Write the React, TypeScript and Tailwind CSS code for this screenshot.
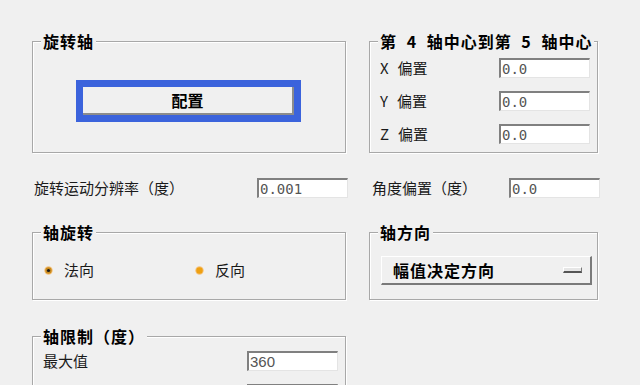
const cjk = "font-['Noto_Sans_CJK_SC','Noto_Sans_CJK_JP',sans-serif]"

function Group({ title, className, children }: { title: string; className: string; children?: React.ReactNode }) {
  return (
    <div className={`border border-[#a8a8a8] shadow-[inset_1px_1px_0_#fff,1px_1px_0_#fff] ${className}`}>
      <div className="-mt-[9px] ml-[8px] px-[2px] w-fit bg-[#f0f0f0] text-[16px] leading-[17px] font-bold text-black tracking-[1px] whitespace-pre [word-spacing:5px]">
        {title}
      </div>
      {children}
    </div>
  )
}

function Field({ value, sans }: { value: string; sans?: boolean }) {
  return (
    <input
      readOnly
      value={value}
      className={`w-[91px] h-[20px] bg-white border-t-2 border-l-2 border-r border-b border-t-[#808080] border-l-[#808080] border-r-[#e4e4e4] border-b-[#e4e4e4] pl-[1px] outline-none text-[#555] ${
        sans ? "font-['Liberation_Sans',sans-serif] text-[15px]" : "font-['DejaVu_Sans_Mono',monospace] text-[14px]"
      }`}
    />
  )
}

function Radio({ label, checked }: { label: string; checked?: boolean }) {
  return (
    <div className="flex items-center gap-[11px]">
      <svg width="9" height="9" viewBox="0 0 9 9">
        <circle cx="4.5" cy="4.5" r="4.2" fill="#f5c27a" />
        <circle cx="4.5" cy="4.5" r="3.2" fill={checked ? "#c98a1e" : "#eea012"} />
        {checked && <circle cx="4.5" cy="4.5" r="1.6" fill="#1a1a1a" />}
      </svg>
      <span>{label}</span>
    </div>
  )
}

export default function App() {
  return (
    <div className={`w-[640px] h-[385px] overflow-hidden bg-[#f0f0f0] pt-[41px] pl-[32px] text-[15px] leading-[20px] text-[#1a1a1a] ${cjk}`}>
      <div className="flex gap-[23px]">
        <Group title="旋转轴" className="w-[314px] h-[112px]">
          <div className="mt-[30px] ml-[43px] w-[225px] h-[42px] border-[7px] border-[#3b63dc] bg-[#f0f0f0]">
            <div className="h-full border-r-2 border-b-2 border-[#8c8c8c] flex items-center justify-center text-[16px] font-bold text-black">
              配置
            </div>
          </div>
        </Group>
        <Group title="第 4 轴中心到第 5 轴中心" className="w-[229px] h-[112px]">
          <div className="mt-[8px] pl-[10px] pr-[7px] flex flex-col gap-[13px]">
            {["X", "Y", "Z"].map((a) => (
              <div key={a} className="flex items-center justify-between h-[20px]">
                <span>
                  {a}
                  <span className="ml-[9px]">偏置</span>
                </span>
                <Field value="0.0" />
              </div>
            ))}
          </div>
        </Group>
      </div>

      <div className="mt-[25px] flex items-center h-[20px]">
        <span className="pl-[2px] w-[225px]">旋转运动分辨率（度）</span>
        <Field value="0.001" />
        <span className="ml-[24px] w-[137px]">角度偏置（度）</span>
        <Field value="0.0" />
      </div>

      <div className="mt-[34px] flex gap-[23px]">
        <Group title="轴旋转" className="w-[314px] h-[68px]">
          <div className="mt-[19px] pl-[11px] flex items-center h-[20px]">
            <div className="w-[151px]">
              <Radio label="法向" checked />
            </div>
            <Radio label="反向" />
          </div>
        </Group>
        <Group title="轴方向" className="w-[229px] h-[68px]">
          <div className="mt-[15px] ml-[11px] w-[211px] h-[29px] bg-[#f0f0f0] border-t border-l border-white border-r-2 border-b-2 border-r-[#7a7a7a] border-b-[#7a7a7a] flex items-center justify-between pl-[11px] pr-[8px]">
            <span className="text-[16px] font-bold text-black tracking-[1px]">幅值决定方向</span>
            <div className="w-[19px] h-[6px] bg-[#e6e6e6] border-t border-l border-white border-b-2 border-r border-b-[#555] border-r-[#777]" />
          </div>
        </Group>
      </div>

      <div className="mt-[36px]">
        <Group title="轴限制（度）" className="w-[314px] h-[80px]">
          <div className="mt-[6px] pl-[10px] flex flex-col gap-[13px]">
            <div className="flex items-center h-[20px]">
              <span className="w-[204px]">最大值</span>
              <Field value="360" sans />
            </div>
            <div className="flex items-center h-[20px]">
              <span className="w-[204px]">最小值</span>
              <Field value="0" sans />
            </div>
          </div>
        </Group>
      </div>
    </div>
  )
}
